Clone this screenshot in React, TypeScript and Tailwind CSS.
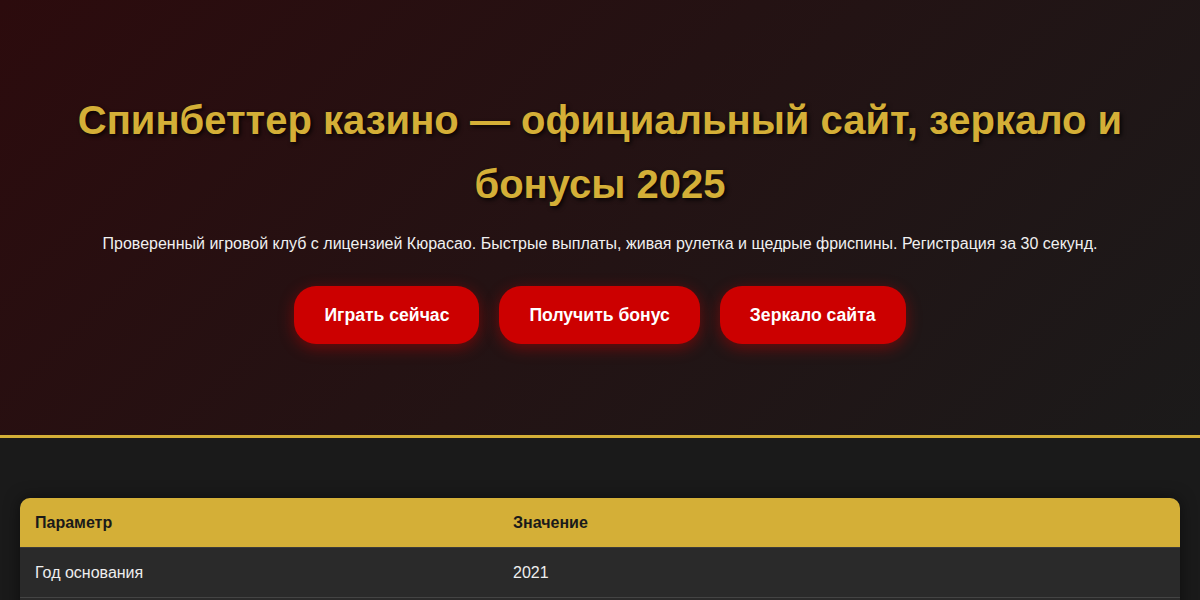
import React from "react";

export default function App() {
  const font = { fontFamily: '"Liberation Sans", Arial, sans-serif' };
  const rows = [
    ["Год основания", "2021"],
    ["Лицензия", "Кюрасао"],
  ];
  return (
    <div className="min-h-[600px] bg-[#1a1a1a] text-[#eeeeee]" style={font}>
      <header className="border-b-[3px] border-[#d4af37] bg-[linear-gradient(135deg,#2c0b0d_0%,#1b1a1a_100%)] px-5 pt-[88px] pb-[91px] text-center">
        <h1 className="mx-auto text-[40px] font-bold leading-[64px] text-[#d4af37] [text-shadow:2px_2px_4px_rgba(0,0,0,0.8)]">
          Спинбеттер казино — официальный сайт, зеркало и бонусы 2025
        </h1>
        <p className="mt-[15px] text-[16px] leading-[25px] text-[#f0f0f0]">
          Проверенный игровой клуб с лицензией Кюрасао. Быстрые выплаты, живая рулетка и щедрые фриспины. Регистрация за 30 секунд.
        </p>
        <div className="mt-[30px] flex justify-center gap-5">
          {["Играть сейчас", "Получить бонус", "Зеркало сайта"].map((t) => (
            <a
              key={t}
              className="flex h-[58px] items-center rounded-[22px] bg-[#cc0000] px-[30px] text-[17.6px] font-bold text-white shadow-[0_4px_15px_rgba(204,0,0,0.45)]"
            >
              {t}
            </a>
          ))}
        </div>
      </header>
      <main className="px-5 pt-[60px] pb-10">
        <div className="overflow-hidden rounded-[10px] bg-[#2a2a2a] shadow-[0_0_15px_rgba(0,0,0,0.5)]">
          <div className="grid grid-cols-[478px_1fr] bg-[#d4af37] text-[16px] font-bold text-[#1a1a1a]">
            <div className="px-[15px] py-[15px] leading-[19px]">Параметр</div>
            <div className="px-[15px] py-[15px] leading-[19px]">Значение</div>
          </div>
          {rows.map(([a, b], i) => (
            <div
              key={a}
              className={
                i === 0
                  ? "grid grid-cols-[478px_1fr] border-t border-[#3a3a3a] border-b border-b-[#444] text-[16px] text-[#eeeeee]"
                  : "grid grid-cols-[478px_1fr] text-[16px] text-[#eeeeee]"
              }
            >
              <div className="px-[15px] py-[15px] leading-[19px]">{a}</div>
              <div className="px-[15px] py-[15px] leading-[19px]">{b}</div>
            </div>
          ))}
        </div>
      </main>
    </div>
  );
}
